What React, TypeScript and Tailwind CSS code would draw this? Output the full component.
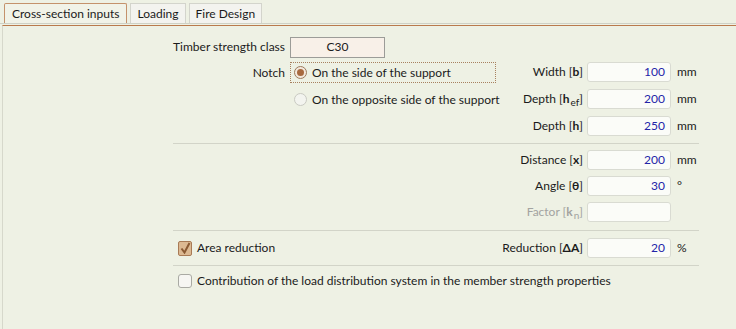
import React from 'react';

const font = { fontFamily: 'Lato, "Liberation Sans", sans-serif' };

const Sep = () => <div className="h-px bg-[#d2d4c8] w-[526px]" />;

interface FieldProps {
  label: React.ReactNode;
  value?: string;
  unit?: string;
  disabled?: boolean;
}

const Field: React.FC<FieldProps> = ({ label, value, unit, disabled }) => (
  <div className="flex items-center h-[20px]">
    <span className={`mr-[4px] whitespace-nowrap ${disabled ? 'text-[#a3a3a0]' : 'text-[#1b1b1b]'}`}>{label}</span>
    <div className="w-[84px] h-[20px] rounded-[3px] border border-[#d9dbd2] bg-[#fbfcf8] flex items-center justify-end pr-[5px] text-[#2424a8]">
      {value}
    </div>
    <span className="w-[22px] ml-[6px] text-[#1b1b1b]">{unit}</span>
  </div>
);

const Sub: React.FC<{ main: string; sub?: string }> = ({ main, sub }) => (
  <>
    [<b className="font-bold">{main}</b>
    {sub && <sub className="text-[10px] relative top-[3px] ml-px">{sub}</sub>}]
  </>
);

const Radio: React.FC<{ checked?: boolean }> = ({ checked }) =>
  checked ? (
    <span className="w-[13px] h-[13px] rounded-full border border-[#9c7a5c] bg-[#f3e8dc] flex items-center justify-center">
      <span className="w-[7px] h-[7px] rounded-full bg-[#a8693f]" />
    </span>
  ) : (
    <span className="w-[13px] h-[13px] rounded-full border border-[#c9cac2] bg-[#f3f4ef]" />
  );

const Check: React.FC<{ checked?: boolean }> = ({ checked }) =>
  checked ? (
    <span className="w-[14px] h-[15px] rounded-[2px] border border-[#a87a55] bg-[#dcb992] flex items-center justify-center">
      <svg width="11" height="12" viewBox="0 0 11 12">
        <path d="M1.5 6.5 L4.5 10.5 L9.5 1" fill="none" stroke="#8a5a33" strokeWidth="2" />
      </svg>
    </span>
  ) : (
    <span className="w-[14px] h-[14px] rounded-[3px] border border-[#a9aaa3] bg-[#f6f6f2]" />
  );

export default function App() {
  return (
    <div className="w-[736px] h-[329px] bg-[#eef1e4] overflow-hidden text-[12px] leading-none" style={font}>
      {/* tabs */}
      <div className="flex items-end h-[24px] pl-[4px] gap-[3px] border-b border-[#cfd1c5]">
        <div className="h-[20px] px-[7px] flex items-center border border-b-0 border-[#c4926b] bg-[#f1f3e8] text-[#1b1b1b] rounded-t-[2px]">
          Cross-section inputs
        </div>
        <div className="h-[20px] px-[6px] flex items-center border border-b-0 border-[#d3d4cc] bg-[#f3f3ef] text-[#1b1b1b]">
          Loading
        </div>
        <div className="h-[20px] px-[6px] flex items-center border border-b-0 border-[#d3d4cc] bg-[#f3f3ef] text-[#1b1b1b]">
          Fire Design
        </div>
      </div>
      <div className="h-[304px] mt-px border-t border-[#b97a4c] ml-[2px] border-l border-l-[#d6d8cb]">
        <div className="pl-[170px] pt-[11px] flex flex-col">
          {/* timber strength class */}
          <div className="flex items-center h-[20px]">
            <span className="w-[112px] text-right text-[#1b1b1b] whitespace-nowrap">Timber strength class</span>
            <div className="ml-[5px] w-[95px] h-[21px] border border-[#9c9c98] bg-[#f8f0e8] flex items-center justify-center text-[#1b1b1b]">
              C30
            </div>
          </div>

          {/* notch + section fields */}
          <div className="flex w-[526px] mt-[5px]">
            <div className="flex items-start">
              <span className="w-[112px] text-right text-[#1b1b1b] mt-[5px]">Notch</span>
              <div className="ml-[5px] flex flex-col">
                <div className="w-[206px] h-[21px] border border-dotted border-[#a8815f] flex items-center pl-[3px] gap-[5px] text-[#1b1b1b]">
                  <Radio checked />
                  <span>On the side of the support</span>
                </div>
                <div className="h-[21px] mt-[6px] flex items-center pl-[4px] gap-[5px] text-[#1b1b1b]">
                  <Radio />
                  <span>On the opposite side of the support</span>
                </div>
              </div>
            </div>
            <div className="ml-auto flex flex-col items-end gap-[7px]">
              <Field label={<>Width <Sub main="b" /></>} value="100" unit="mm" />
              <Field label={<>Depth <Sub main="h" sub="ef" /></>} value="200" unit="mm" />
              <Field label={<>Depth <Sub main="h" /></>} value="250" unit="mm" />
            </div>
          </div>

          <div className="mt-[7px]"><Sep /></div>

          <div className="w-[526px] flex flex-col items-end gap-[6px] mt-[6px]">
            <Field label={<>Distance <Sub main="x" /></>} value="200" unit="mm" />
            <Field label={<>Angle <Sub main="θ" /></>} value="30" unit="°" />
            <Field label={<>Factor <Sub main="k" sub="n" /></>} disabled />
          </div>

          <div className="mt-[8px]"><Sep /></div>

          <div className="w-[526px] flex items-center mt-[7px]">
            <div className="flex items-center gap-[5px] pl-[5px] text-[#1b1b1b]">
              <Check checked />
              <span>Area reduction</span>
            </div>
            <div className="ml-auto">
              <Field label={<>Reduction <Sub main="ΔA" /></>} value="20" unit="%" />
            </div>
          </div>

          <div className="mt-[7px]"><Sep /></div>

          <div className="flex items-center gap-[5px] pl-[5px] mt-[8px] text-[#1b1b1b]">
            <Check />
            <span>Contribution of the load distribution system in the member strength properties</span>
          </div>
        </div>
      </div>
    </div>
  );
}
